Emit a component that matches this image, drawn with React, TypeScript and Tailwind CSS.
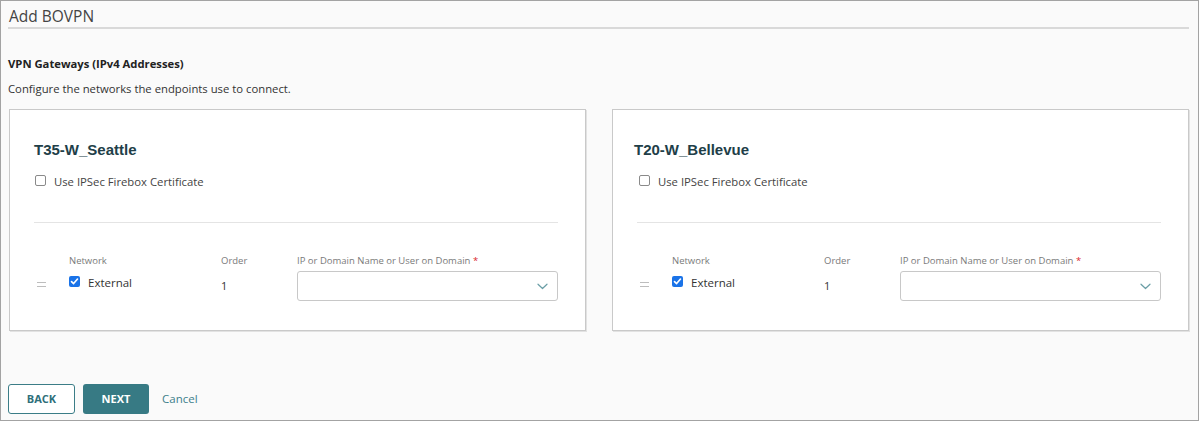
const sans = "font-['Open_Sans','Liberation_Sans',sans-serif]";

type GatewayProps = {
  name: string;
  shiftTitle?: boolean;
};

const GatewayCard = ({ name, shiftTitle }: GatewayProps) => {
  return (
    <div className="w-[577px] bg-white border border-[#c9c9c9] shadow-[1px_1px_0_#e2e2e2] pl-[24px] pr-[27px] pt-[31px] pb-[29px]">
      <h2
        className={`font-['Liberation_Sans',Arial,sans-serif] text-[15px] leading-[18px] font-bold text-[#213e48] ${shiftTitle ? '-ml-[3px]' : ''}`}
      >
        {name}
      </h2>

      <label className={`mt-[15px] flex items-start h-[16px] ${shiftTitle ? 'ml-[1px]' : ''}`}>
        <span className="mt-[1px] ml-[1px] w-[11px] h-[11px] rounded-[2px] border border-[#8a8a8a] bg-white" />
        <span className="ml-[8px] text-[11.3px] leading-[16px] text-[#444]">Use IPSec Firebox Certificate</span>
      </label>

      <div className="mt-[32px] border-t border-[#e4e4e4]" />

      <div className="mt-[31px] grid grid-cols-[35px_152px_76px_261px] grid-rows-[13px_30px] gap-y-[4px]">
        <div />
        <div className="text-[9.5px] leading-[13px] text-[#7a7a7a]">Network</div>
        <div className="text-[9.5px] leading-[13px] text-[#7a7a7a]">Order</div>
        <div className="text-[9.5px] leading-[13px] text-[#7a7a7a]">
          IP or Domain Name or User on Domain <span className="text-[#d9262c]">*</span>
        </div>

        <div className="pt-[11px] pl-[3px]">
          <div className="w-[9px] h-[5px] border-y border-[#bdbdbd]" />
        </div>
        <div className="flex items-start">
          <span className="mt-[5px] w-[11px] h-[11px] rounded-[2px] bg-[#1a73e8] flex items-center justify-center">
            <svg width="9" height="9" viewBox="0 0 9 9" fill="none">
              <path d="M1.5 4.6 L3.6 6.6 L7.5 2" stroke="white" strokeWidth="1.6" strokeLinecap="round" strokeLinejoin="round" />
            </svg>
          </span>
          <span className="ml-[8px] mt-[4px] text-[11.5px] leading-[16px] text-[#333]">External</span>
        </div>
        <div className="pt-[7px] text-[11px] leading-[16px] text-[#333]">1</div>
        <div className="h-[30px] rounded-[3px] border border-[#c8c8c8] bg-white flex items-center justify-end pr-[9px]">
          <svg width="11" height="7" viewBox="0 0 11 7" fill="none" className="mt-[1px]">
            <path d="M1 1.2 L5.5 5.5 L10 1.2" stroke="#6a9ea6" strokeWidth="1.2" strokeLinecap="round" strokeLinejoin="round" />
          </svg>
        </div>
      </div>
    </div>
  );
};

export default function App() {
  return (
    <div className={`${sans} w-[1199px] h-[421px] border border-[#a3a3a3] bg-[#fafafa] pl-[7px] pr-[9px] flex flex-col`}>
      <div className="pt-[5px] pb-px border-b-2 border-[#d9d9d9]">
        <h1 className="text-[15.5px] leading-[20px] text-[#444] pl-px">Add BOVPN</h1>
      </div>

      <div className="mt-[27px] text-[11.25px] leading-[15px] font-bold text-[#222]">VPN Gateways (IPv4 Addresses)</div>
      <div className="mt-[10px] text-[11.3px] leading-[16px] text-[#333]">Configure the networks the endpoints use to connect.</div>

      <div className="mt-[12px] ml-px flex gap-[26px]">
        <GatewayCard name="T35-W_Seattle" />
        <GatewayCard name="T20-W_Bellevue" shiftTitle />
      </div>

      <div className="mt-[53px] flex items-center">
        <button className="w-[67px] h-[30px] rounded-[3px] border border-[#3b7d87] bg-white text-[11px] font-bold text-[#2f6f7a]">
          BACK
        </button>
        <button className="ml-[8px] w-[66px] h-[30px] rounded-[3px] bg-[#377a84] text-[11px] font-bold text-white">
          NEXT
        </button>
        <button className="ml-[13px] text-[11.5px] text-[#3d7f8a]">Cancel</button>
      </div>
    </div>
  );
}
